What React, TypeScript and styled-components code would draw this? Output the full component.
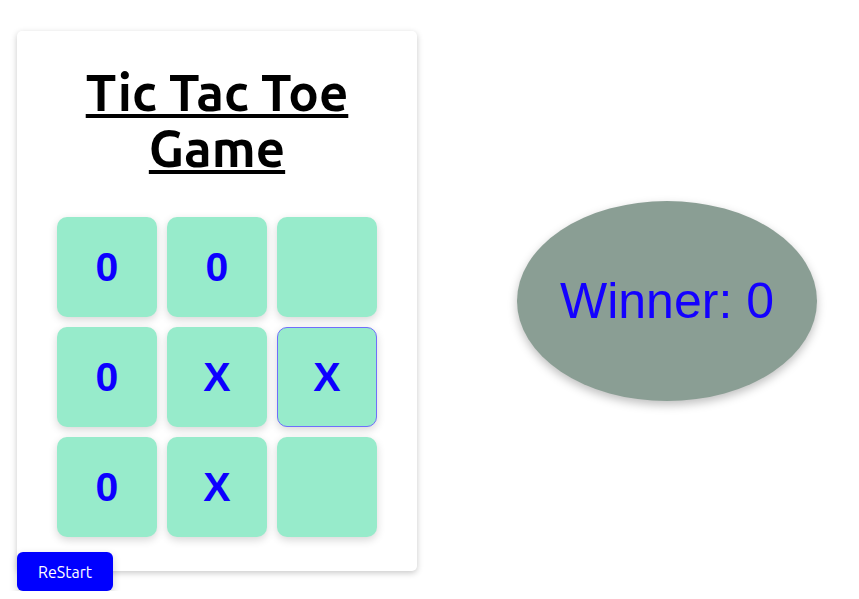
import React from "react";
import styled, { createGlobalStyle } from "styled-components";

const Global = createGlobalStyle`
  body {
    margin: 8px;
    background: #ffffff;
    font-family: Ubuntu, "Open Sans", "Noto Sans", sans-serif;
  }
`;

const Page = styled.div`
  display: flex;
  align-items: flex-start;
  gap: 100px;
  padding: 23px 0 0 9px;
`;

const LeftColumn = styled.div`
  display: flex;
  flex-direction: column;
  align-items: flex-start;
  flex-shrink: 0;
`;

const Card = styled.div`
  box-sizing: border-box;
  width: 400px;
  height: 540px;
  background: #ffffff;
  border-radius: 5px;
  box-shadow: 0 2px 6px rgba(0, 0, 0, 0.22);
  display: flex;
  flex-direction: column;
  align-items: center;
  padding-top: 33px;
`;

const Title = styled.h1`
  margin: 0;
  font-family: Ubuntu, "Open Sans", "Noto Sans", sans-serif;
  font-size: 51px;
  font-weight: 700;
  line-height: 56px;
  text-align: center;
  text-decoration: underline;
  text-decoration-thickness: 4px;
  text-underline-offset: 3px;
  color: #000000;
`;

const Board = styled.div`
  margin-top: 41px;
  display: grid;
  grid-template-columns: repeat(3, 100px);
  grid-auto-rows: 100px;
  gap: 10px;
`;

const Cell = styled.button<{ $focused?: boolean }>`
  box-sizing: border-box;
  width: 100px;
  height: 100px;
  border: 1px solid ${(p) => (p.$focused ? "#6f6ffc" : "transparent")};
  border-radius: 10px;
  background: #97ebcb;
  box-shadow: 0 3px 8px rgba(0, 0, 0, 0.16);
  font-family: "Liberation Sans", Arial, sans-serif;
  font-weight: 700;
  font-size: 41px;
  color: #0c00ff;
  display: flex;
  align-items: center;
  justify-content: center;
  padding: 0;
  cursor: pointer;
`;

const Restart = styled.button`
  margin-top: -19px;
  width: 96px;
  height: 39px;
  border: none;
  border-radius: 6px;
  background: #0000ff;
  color: #ffffff;
  font-family: Ubuntu, "Open Sans", "Noto Sans", sans-serif;
  font-size: 16px;
  box-shadow: 0 3px 8px rgba(0, 0, 0, 0.18);
  cursor: pointer;
  position: relative;
`;

const Winner = styled.div`
  margin-top: 170px;
  width: 300px;
  height: 200px;
  border-radius: 50%;
  background: #8a9e94;
  box-shadow: 0 4px 10px rgba(0, 0, 0, 0.25);
  display: flex;
  align-items: center;
  justify-content: center;
  font-family: "Liberation Sans", Arial, sans-serif;
  font-size: 50px;
  color: #1400ff;
  flex-shrink: 0;
`;

const cells: string[] = ["0", "0", "", "0", "X", "X", "0", "X", ""];

export default function App() {
  return (
    <>
      <Global />
      <Page>
        <LeftColumn>
          <Card>
            <Title>
              Tic Tac Toe
              <br />
              Game
            </Title>
            <Board>
              {cells.map((v, i) => (
                <Cell key={i} $focused={i === 5}>
                  {v}
                </Cell>
              ))}
            </Board>
          </Card>
          <Restart>ReStart</Restart>
        </LeftColumn>
        <Winner>Winner: 0</Winner>
      </Page>
    </>
  );
}
